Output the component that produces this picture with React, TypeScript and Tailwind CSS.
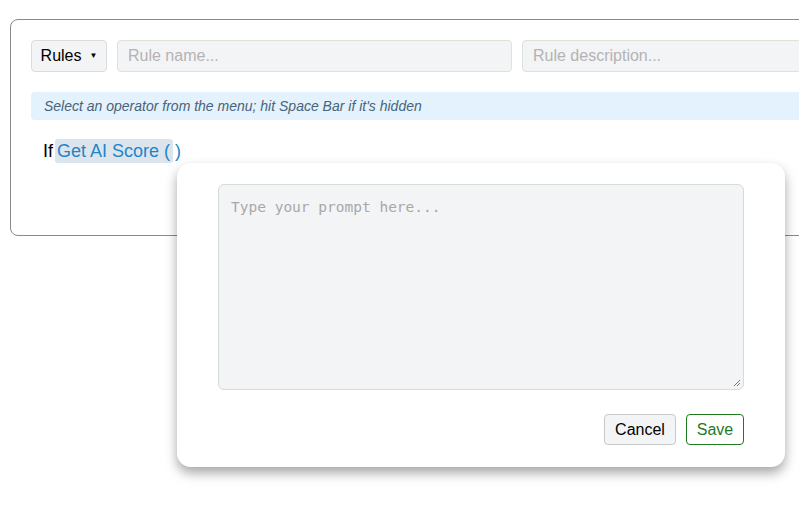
import React from "react";

export default function App() {
  return (
    <div
      className="relative w-[799px] h-[519px] overflow-hidden bg-white"
      style={{ fontFamily: '"Liberation Sans", Arial, sans-serif' }}
    >
      {/* rule editor card */}
      <div className="ml-[10px] mt-[19px] w-[830px] h-[217px] rounded-[8px] border border-[#8a8a8a] pl-[20px] pt-[20px]">
        <div className="flex items-center gap-[10px]">
          <button className="flex h-[32px] w-[76px] items-center justify-center gap-[8px] rounded-[4px] border border-[#dcdcdc] bg-[#f3f4f6] text-[16px] text-black">
            <span>Rules</span>
            <span className="text-[8px] leading-none">▼</span>
          </button>
          <div className="flex h-[32px] w-[395px] items-center rounded-[4px] border border-[#dde3d8] bg-[#f3f4f6] px-[10px] text-[16px] text-[#b3b3b3]">
            Rule name...
          </div>
          <div className="flex h-[32px] w-[300px] items-center rounded-[4px] border border-[#dde3d8] bg-[#f3f4f6] px-[10px] text-[16px] text-[#b3b3b3]">
            Rule description...
          </div>
        </div>
        <div className="mt-[20px] flex h-[28px] items-center rounded-[4px] bg-[#e3f2fd] pl-[13px] text-[14px] italic text-[#4a6378]">
          Select an operator from the menu; hit Space Bar if it's hidden
        </div>
        <div className="mt-[19px] flex items-center pl-[12px] text-[18px] leading-[24px]">
          <span className="text-black">If</span>
          <span className="ml-[2px] rounded-[3px] bg-[#dce5ec] pl-[2px] pr-[3px] text-[#1f84cc]">Get AI Score (</span>
          <span className="ml-[2px] text-[#1f84cc]">)</span>
        </div>
      </div>

      {/* prompt popover */}
      <div className="absolute left-[177px] top-[163px] flex h-[304px] w-[608px] flex-col rounded-[14px] bg-white px-[41px] pt-[21px] shadow-[0_6px_12px_rgba(0,0,0,0.35)]">
        <div
          className="relative h-[206px] w-[526px] rounded-[6px] border border-[#d6dcd3] bg-[#f3f4f6] px-[12px] pt-[12px] text-[14.5px] text-[#a8a8a8]"
          style={{ fontFamily: '"DejaVu Sans Mono", "Liberation Mono", monospace' }}
        >
          Type your prompt here...
          <svg className="absolute bottom-[2px] right-[2px]" width="8" height="8" viewBox="0 0 8 8">
            <path d="M7 1 L1 7 M7 4 L4 7" stroke="#777" strokeWidth="1" />
          </svg>
        </div>
        <div className="mt-[24px] flex justify-end gap-[10px]">
          <button className="h-[31px] w-[72px] rounded-[4px] border border-[#c8c8c8] bg-[#f3f4f6] text-[16px] text-black">
            Cancel
          </button>
          <button className="h-[31px] w-[58px] rounded-[4px] border border-[#1e7a1e] bg-white text-[16px] text-[#1e7a1e]">
            Save
          </button>
        </div>
      </div>
    </div>
  );
}
